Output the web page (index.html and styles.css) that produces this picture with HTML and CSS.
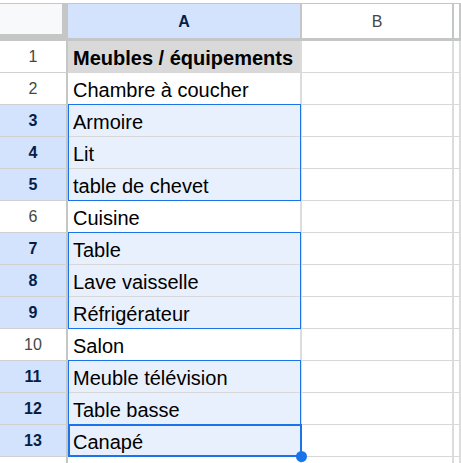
FILE: index.html
```html
<!DOCTYPE html>
<html lang="fr">
<head>
    <meta charset="UTF-8">
    <meta name="viewport" content="width=device-width, initial-scale=1.0">
    <title>Meubles</title>
    <link rel="stylesheet" href="styles.css">
</head>
<body>
    <div class="sheet">
        <div class="grid cells">
            <!-- column headers -->
            <div class="corner"></div>
            <div class="col-head picked">A</div>
            <div class="col-head">B</div>
            <div class="col-head"></div>

            <div class="row-head">1</div>
            <div class="cell title">Meubles / équipements</div>
            <div class="cell"></div>
            <div class="cell"></div>

            <div class="row-head">2</div>
            <div class="cell">Chambre à coucher</div>
            <div class="cell"></div>
            <div class="cell"></div>

            <div class="row-head picked">3</div>
            <div class="cell sel">Armoire</div>
            <div class="cell"></div>
            <div class="cell"></div>

            <div class="row-head picked">4</div>
            <div class="cell sel">Lit</div>
            <div class="cell"></div>
            <div class="cell"></div>

            <div class="row-head picked">5</div>
            <div class="cell sel">table de chevet</div>
            <div class="cell"></div>
            <div class="cell"></div>

            <div class="row-head">6</div>
            <div class="cell">Cuisine</div>
            <div class="cell"></div>
            <div class="cell"></div>

            <div class="row-head picked">7</div>
            <div class="cell sel">Table</div>
            <div class="cell"></div>
            <div class="cell"></div>

            <div class="row-head picked">8</div>
            <div class="cell sel">Lave vaisselle</div>
            <div class="cell"></div>
            <div class="cell"></div>

            <div class="row-head picked">9</div>
            <div class="cell sel">Réfrigérateur</div>
            <div class="cell"></div>
            <div class="cell"></div>

            <div class="row-head">10</div>
            <div class="cell">Salon</div>
            <div class="cell"></div>
            <div class="cell"></div>

            <div class="row-head picked">11</div>
            <div class="cell sel">Meuble télévision</div>
            <div class="cell"></div>
            <div class="cell"></div>

            <div class="row-head picked">12</div>
            <div class="cell sel">Table basse</div>
            <div class="cell"></div>
            <div class="cell"></div>

            <div class="row-head picked">13</div>
            <div class="cell sel">Canapé</div>
            <div class="cell"></div>
            <div class="cell"></div>

            <div class="row-head"></div>
            <div class="cell"></div>
            <div class="cell"></div>
            <div class="cell"></div>
        </div>

        <!-- selection outlines, laid on the same tracks as the cells -->
        <div class="grid marks">
            <div class="range r1"></div>
            <div class="range r2"></div>
            <div class="range r3"></div>
            <div class="active"></div>
        </div>
    </div>
</body>
</html>
```

FILE: styles.css
```css
* {
    box-sizing: border-box;
}
body {
    margin: 0;
    padding-top: 3px;
    font-family: "Liberation Sans", Arial, sans-serif;
    background: #fff;
    overflow: hidden;
}
.sheet {
    display: grid;
    border-top: 1px solid #c4c7c5;
}
.grid {
    grid-area: 1 / 1;
    display: grid;
    grid-template-columns: 68px 234px 152px 1fr;
    grid-template-rows: 37px repeat(13, 32px) 20px;
}
.marks {
    pointer-events: none;
}
.corner {
    background: #f8f9fa;
    border-right: 6px solid #c4c7c5;
    border-bottom: 7px solid #c4c7c5;
}
.col-head {
    display: flex;
    align-items: center;
    justify-content: center;
    font-size: 16px;
    color: #444746;
    background: #fff;
    border-right: 2px solid #c4c7c5;
    border-bottom: 3px solid #c4c7c5;
    padding-top: 2px;
}
.col-head.picked {
    background: #d3e3fd;
    color: #041e49;
    font-weight: bold;
}
.row-head {
    display: flex;
    align-items: center;
    justify-content: center;
    padding-top: 1px;
    font-size: 16px;
    color: #444746;
    background: #fff;
    border-right: 2px solid #c4c7c5;
    border-bottom: 1px solid #d0d0d0;
}
.row-head.picked {
    background: #d3e3fd;
    color: #041e49;
    font-weight: bold;
}
.cell {
    display: flex;
    align-items: center;
    padding: 3px 0 0 5px;
    font-size: 20px;
    color: #000;
    white-space: nowrap;
    border-right: 2px solid #dcdcdc;
    border-bottom: 1px solid #d8d8d8;
}
.cell.title {
    background: #d9d9d9;
    font-weight: bold;
}
.cell.sel {
    background: #e8f0fd;
}
.range {
    grid-column: 2;
    margin: -1px 1px 0 0;
    border: 1px solid #1a73e8;
}
.r1 {
    grid-row: 4 / 7;
}
.r2 {
    grid-row: 8 / 11;
}
.r3 {
    grid-row: 12 / 15;
}
.active {
    grid-column: 2;
    grid-row: 14;
    position: relative;
    margin: -1px 0 0 0;
    border: 2px solid #1a73e8;
}
/* fill handle */
.active::after {
    content: "";
    position: absolute;
    right: -7px;
    bottom: -7px;
    width: 11px;
    height: 11px;
    border-radius: 50%;
    background: #1a73e8;
}
```
